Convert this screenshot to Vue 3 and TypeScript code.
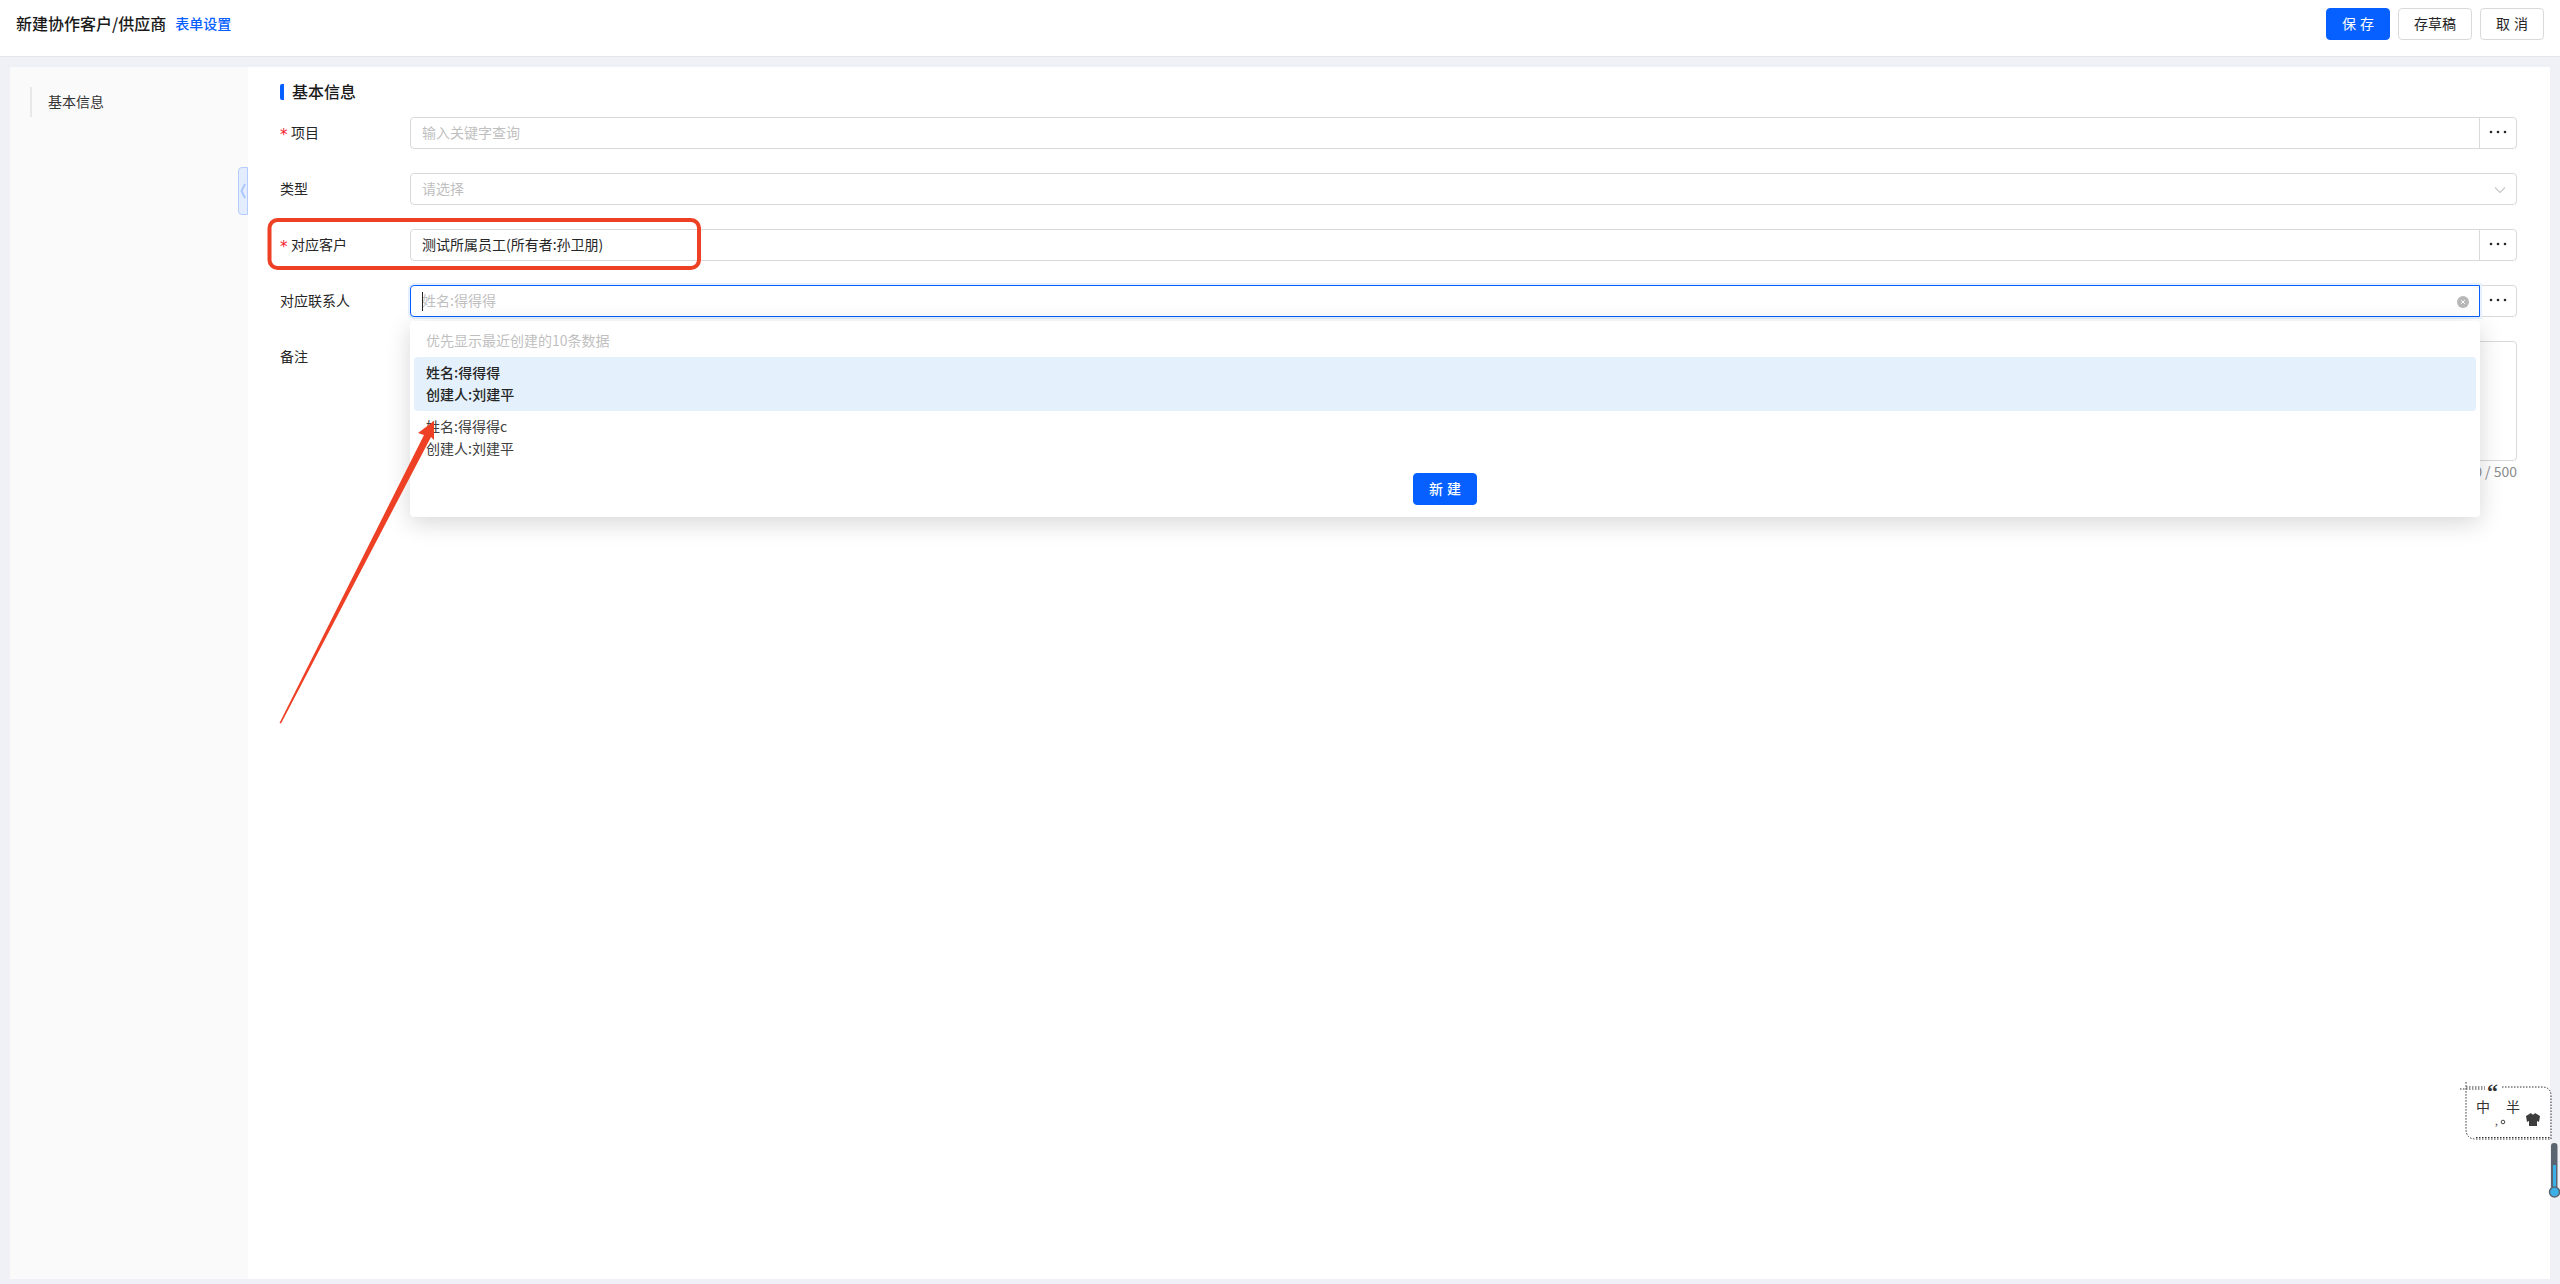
<script setup lang="ts">
interface Option { name: string; creator: string; active: boolean }
const options: Option[] = [
  { name: '姓名:得得得', creator: '创建人:刘建平', active: true },
  { name: '姓名:得得得c', creator: '创建人:刘建平', active: false }
]
</script>

<template>
  <div class="page">
    <header class="topbar">
      <div class="title-wrap">
        <span class="title">新建协作客户/供应商</span>
        <a class="link">表单设置</a>
      </div>
      <div class="actions">
        <button class="btn primary spaced">保存</button>
        <button class="btn draft">存草稿</button>
        <button class="btn spaced">取消</button>
      </div>
    </header>

    <main class="panel">
      <aside class="side">
        <div class="side-item">基本信息</div>
        <div class="collapse">
          <svg width="6" height="16" viewBox="0 0 6 16"><path d="M5 1 L1.5 8 L5 15" fill="none" stroke="#a9c5ff" stroke-width="1.8" /></svg>
        </div>
      </aside>

      <section class="content">
        <h2 class="heading"><span>基本信息</span></h2>

        <div class="row">
          <label class="label"><i class="star">*</i>项目</label>
          <div class="field with-addon">
            <div class="input placeholder">输入关键字查询</div>
            <div class="addon"><svg width="18" height="4" viewBox="0 0 18 4"><circle cx="2" cy="2" r="1.3" /><circle cx="9" cy="2" r="1.3" /><circle cx="16" cy="2" r="1.3" /></svg></div>
          </div>
        </div>

        <div class="row">
          <label class="label">类型</label>
          <div class="field">
            <div class="input select placeholder">
              请选择
              <svg class="chev" width="12" height="8" viewBox="0 0 12 8"><path d="M1 1.5 L6 6.5 L11 1.5" fill="none" stroke="#c8c8c8" stroke-width="1.2" /></svg>
            </div>
          </div>
        </div>

        <div class="row">
          <label class="label"><i class="star">*</i>对应客户</label>
          <div class="field with-addon">
            <div class="input">测试所属员工(所有者:孙卫朋)</div>
            <div class="addon"><svg width="18" height="4" viewBox="0 0 18 4"><circle cx="2" cy="2" r="1.3" /><circle cx="9" cy="2" r="1.3" /><circle cx="16" cy="2" r="1.3" /></svg></div>
          </div>
        </div>

        <div class="row">
          <label class="label">对应联系人</label>
          <div class="field with-addon">
            <div class="input focused placeholder">
              <span class="caret"></span>姓名:得得得
              <svg class="clear" width="12" height="12" viewBox="0 0 12 12"><circle cx="6" cy="6" r="6" fill="#b8b8b8" /><path d="M4.2 4.2 L7.8 7.8 M7.8 4.2 L4.2 7.8" stroke="#fff" stroke-width="1" /></svg>
            </div>
            <div class="addon"><svg width="18" height="4" viewBox="0 0 18 4"><circle cx="2" cy="2" r="1.3" /><circle cx="9" cy="2" r="1.3" /><circle cx="16" cy="2" r="1.3" /></svg></div>

            <div class="dropdown">
              <div class="hint">优先显示最近创建的10条数据</div>
              <div v-for="o in options" :key="o.name" class="option" :class="{ active: o.active }">
                <div>{{ o.name }}</div>
                <div>{{ o.creator }}</div>
              </div>
              <div class="drop-foot"><button class="btn primary spaced strong">新建</button></div>
            </div>
          </div>
        </div>

        <div class="row area-row">
          <label class="label">备注</label>
          <div class="field area-field">
            <div class="textarea"></div>
            <div class="count">0 / 500</div>
          </div>
        </div>
      </section>
    </main>

    <svg class="annot" width="2560" height="1284" viewBox="0 0 2560 1284">
      <rect x="269.5" y="220" width="429.5" height="48" rx="8" fill="none" stroke="#ee4024" stroke-width="4" />
      <polygon points="279.5,723 281,723.5 431,437 434,440 434,421 418,433 424,435" fill="#ee4024" />
    </svg>

    <svg class="ime" width="100" height="130" viewBox="2460 1075 100 130">
      <path d="M2466 1087 H2485 M2502 1087 H2542 Q2551 1087 2551 1096 V1139 H2476 Q2466 1139 2466 1129 V1082" fill="none" stroke="#333" stroke-width="1" stroke-dasharray="1.5 1.5" />
      <path d="M2457 1089 H2485 M2476 1137.5 H2551" fill="none" stroke="#333" stroke-width="1" stroke-dasharray="1.5 1.5" />
      <text x="2487" y="1099" class="ime-q">“</text>
      <text x="2476" y="1112" class="ime-t">中</text>
      <text x="2506" y="1112" class="ime-t">半</text>
      <text x="2495" y="1125" class="ime-s">,</text>
      <circle cx="2503" cy="1122" r="1.8" fill="none" stroke="#444" stroke-width="1" />
      <path d="M2526 1116 L2531 1113 Q2533 1116 2535 1113 L2540 1116 L2539 1122 L2537 1121 V1126 H2529 V1121 L2527 1122 Z" fill="#3c3c3c" />
      <rect x="2551" y="1143" width="6.5" height="46" rx="3" fill="#5a6470" />
      <rect x="2553" y="1165" width="3" height="25" fill="#3bb0e6" />
      <circle cx="2554.5" cy="1192" r="5" fill="#3bb0e6" stroke="#5a6470" stroke-width="1.5" />
    </svg>
  </div>
</template>

<style scoped>
.page {
  position: relative;
  width: 2560px;
  height: 1284px;
  overflow: hidden;
  background: #f0f1f6;
  font-family: "Noto Sans CJK SC", "Noto Sans", sans-serif;
  font-size: 14px;
  color: #262626;
  display: flex;
  flex-direction: column;
}
.topbar {
  flex: none;
  background: #fff;
  border-bottom: 1px solid #e6e6e9;
  display: flex;
  align-items: center;
  justify-content: space-between;
  padding: 8px 16px 16px;
}
.title-wrap { display: flex; align-items: center; gap: 9px; margin-top: -2px; }
.title { font-size: 16px; font-weight: 500; color: #1a1a1a; }
.link { color: #0660ff; font-weight: 500; }
.actions { display: flex; gap: 8px; }
.btn {
  width: 64px;
  height: 32px;
  border: 1px solid #d9d9d9;
  border-radius: 4px;
  background: #fff;
  color: #262626;
  font: inherit;
  padding: 0 0 2px;
  cursor: pointer;
}
.btn.spaced { letter-spacing: 4px; text-indent: 4px; }
.btn.strong { font-weight: 500; }
.btn.draft { width: 74px; }
.btn.primary { background: #0660ff; border-color: #0660ff; color: #fff; }
.panel {
  flex: none;
  height: 1212px;
  margin: 10px 10px 0;
  display: flex;
  background: #fff;
}
.side {
  position: relative;
  width: 238px;
  flex: none;
  background: #fafafa;
  padding: 20px 0 0 20px;
  box-sizing: border-box;
}
.side-item {
  height: 30px;
  line-height: 28px;
  border-left: 2px solid #e8e8e8;
  padding-left: 16px;
  color: #333;
}
.collapse {
  position: absolute;
  right: 0;
  top: 100px;
  width: 10px;
  height: 48px;
  box-sizing: border-box;
  background: #e3edff;
  border: 1px solid #b4ccff;
  border-radius: 4px 0 0 4px;
  display: flex;
  align-items: center;
  justify-content: center;
}
.collapse svg { flex: none; }
.content {
  flex: 1;
  padding: 17px 33px 0 32px;
  min-width: 0;
}
.heading {
  margin: 0 0 17px;
  height: 16px;
  font-size: 16px;
  font-weight: 500;
  color: #1a1a1a;
  border-left: 4px solid #0660ff;
  border-radius: 2px 0 0 2px;
  padding-left: 8px;
  display: flex;
  align-items: center;
}
.heading span { line-height: 14px; margin-top: -2px; }
.row {
  display: flex;
  align-items: center;
  margin-bottom: 24px;
  height: 32px;
}
.label {
  width: 130px;
  flex: none;
  color: #262626;
  display: flex;
  align-items: center;
  padding-bottom: 2px;
  box-sizing: border-box;
}
.star {
  width: 11px;
  color: #f5222d;
  font-style: normal;
  font-family: "DejaVu Sans", sans-serif;
  font-size: 15px;
  line-height: 14px;
  transform: translateY(3px);
}
.field { position: relative; flex: 1; min-width: 0; display: flex; }
.input {
  position: relative;
  flex: 1;
  height: 32px;
  box-sizing: border-box;
  border: 1px solid #d9d9d9;
  border-radius: 4px;
  padding: 0 11px;
  line-height: 28px;
  background: #fff;
}
.with-addon .input { border-radius: 4px 0 0 4px; }
.placeholder { color: #bfbfbf; }
.addon {
  width: 38px;
  flex: none;
  height: 32px;
  box-sizing: border-box;
  margin-left: -1px;
  border: 1px solid #d9d9d9;
  border-radius: 0 4px 4px 0;
  background: #fff;
  display: flex;
  align-items: center;
  justify-content: center;
  padding-bottom: 2px;
}
.addon svg { fill: #262626; }
.focused {
  z-index: 1;
  border-color: #0660ff;
  box-shadow: 0 0 0 2px #e6f0ff;
}
.caret {
  position: absolute;
  left: 11px;
  top: 6px;
  width: 1px;
  height: 19px;
  background: #262626;
}
.clear {
  position: absolute;
  right: 10px;
  top: 10px;
}
.chev {
  position: absolute;
  right: 10px;
  top: 12px;
}
.dropdown {
  position: absolute;
  z-index: 2;
  left: 0;
  top: 36px;
  width: 2070px;
  height: 196px;
  box-sizing: border-box;
  background: #fff;
  border-radius: 4px;
  box-shadow: 0 6px 24px rgba(0, 0, 0, 0.16);
  padding: 8px 4px 0;
}
.hint {
  height: 28px;
  line-height: 22px;
  padding-left: 12px;
  color: #bfbfbf;
}
.option {
  height: 54px;
  padding: 4px 12px;
  box-sizing: border-box;
  line-height: 22px;
  border-radius: 4px;
  color: #404040;
}
.option.active { background: #e4f1fd; color: #262626; font-weight: 500; }
.drop-foot { display: flex; justify-content: center; padding-top: 8px; }
.area-row { align-items: flex-start; height: 140px; }
.area-row .label { height: 32px; }
.area-field { flex-direction: column; }
.textarea {
  height: 120px;
  box-sizing: border-box;
  border: 1px solid #d9d9d9;
  border-radius: 4px;
  background: #fff;
}
.count {
  text-align: right;
  line-height: 20px;
  color: #8c8c8c;
}
.annot {
  position: absolute;
  left: 0;
  top: 0;
  z-index: 5;
  pointer-events: none;
}
.ime {
  position: absolute;
  left: 2460px;
  top: 1075px;
  z-index: 6;
  pointer-events: none;
}
.ime-t { font-size: 14px; fill: #333; }
.ime-q { font-size: 22px; font-weight: 700; fill: #333; font-family: "Liberation Serif", serif; }
.ime-s { font-size: 10px; fill: #444; }
</style>

<style>
html, body { margin: 0; padding: 0; }
</style>
